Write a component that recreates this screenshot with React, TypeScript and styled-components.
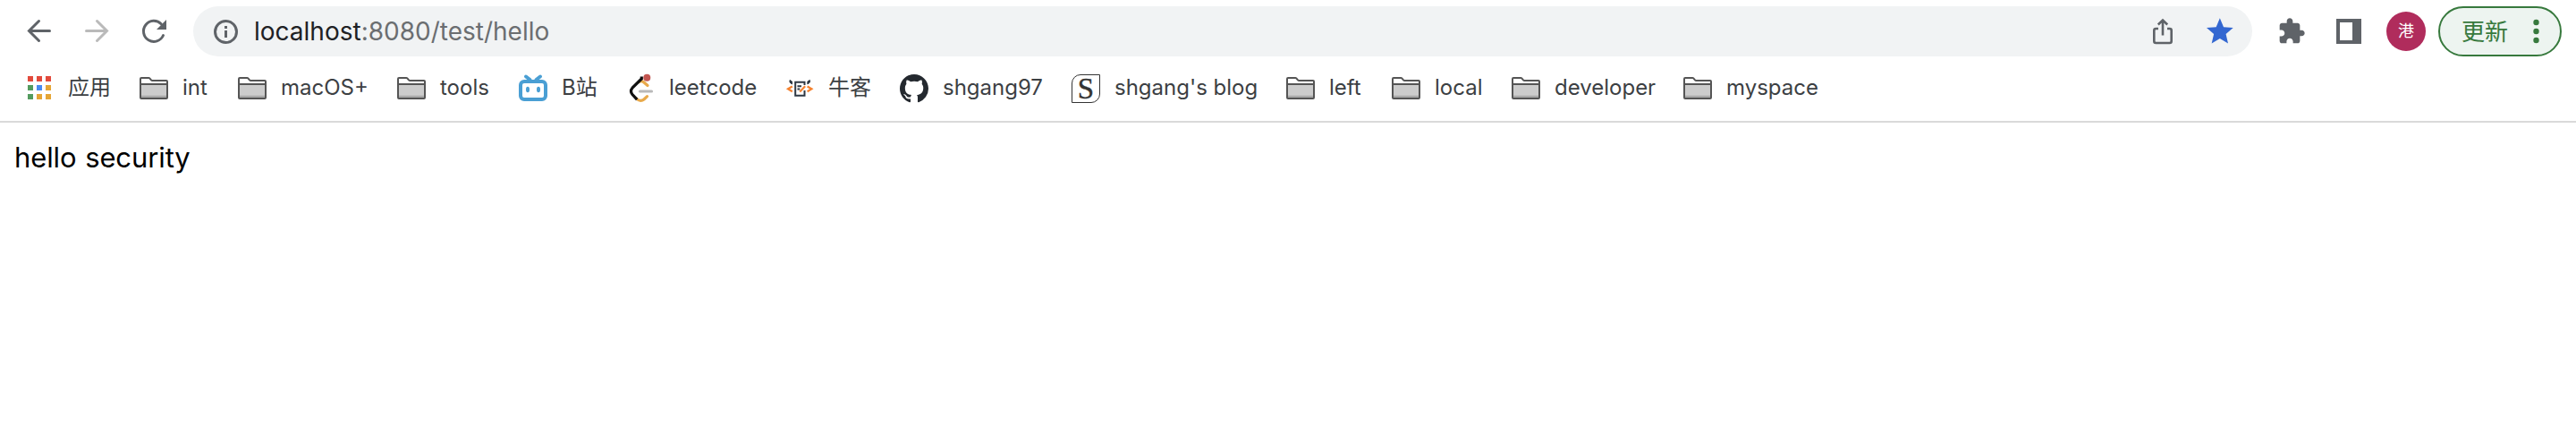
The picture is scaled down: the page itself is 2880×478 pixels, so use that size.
import React from "react";
import styled, { createGlobalStyle } from "styled-components";

const GlobalStyle = createGlobalStyle`
  body {
    margin: 0;
    background: #ffffff;
    font-family: Inter, "Noto Sans CJK SC", sans-serif;
  }
`;

const Browser = styled.div`
  display: flex;
  flex-direction: column;
  min-height: 478px;
`;

const Toolbar = styled.header`
  display: flex;
  align-items: center;
  height: 70px;
  padding: 0 16px 0 28px;
`;

const NavGroup = styled.nav`
  display: flex;
  gap: 32px;
  margin-right: 28px;
`;

const IconButton = styled.button<{ $color?: string }>`
  width: 32px;
  height: 32px;
  padding: 0;
  border: 0;
  background: none;
  color: ${(p) => p.$color ?? "#5f6368"};
`;

const Glyph = styled.svg`
  display: block;
  width: 32px;
  height: 32px;
  flex: none;
  overflow: visible;
`;

const AddressBar = styled.div`
  display: flex;
  flex: 1;
  align-items: center;
  height: 56px;
  padding: 0 20px 0 22px;
  border-radius: 28px;
  background: #f1f3f4;
`;

const InfoIcon = styled.svg`
  display: block;
  width: 28px;
  height: 28px;
  margin-right: 18px;
  overflow: visible;
`;

const Url = styled.div`
  flex: 1;
  font-size: 28px;
  line-height: 36px;
  color: #6b6e71;
`;

const Host = styled.span`
  color: #202124;
`;

const ActionGroup = styled.div`
  display: flex;
  gap: 32px;
`;

const ExtensionGroup = styled(ActionGroup)`
  margin: 0 26px 0 28px;
`;

const Avatar = styled.div`
  display: grid;
  place-items: center;
  box-sizing: border-box;
  width: 44px;
  height: 44px;
  margin-right: 14px;
  padding-bottom: 4px;
  border-radius: 50%;
  background: #b02c5c;
  color: #ffffff;
  font: 18px/26px "Noto Sans CJK SC", sans-serif;
`;

const UpdateButton = styled.button`
  display: flex;
  align-items: center;
  justify-content: space-between;
  box-sizing: border-box;
  width: 138px;
  height: 56px;
  padding: 0 23px 0 24px;
  border: 2px solid #37793d;
  border-radius: 28px;
  background: #edf4f0;
  color: #37793d;
  font: 26px/36px "Noto Sans CJK SC", sans-serif;
`;

const UpdateText = styled.span`
  padding-bottom: 2px;
`;

const MenuDots = styled.svg`
  width: 7px;
  height: 28px;
`;

const BookmarksBar = styled.div`
  display: flex;
  align-items: center;
  gap: 32px;
  box-sizing: border-box;
  height: 67px;
  padding: 0 28px 7px;
  border-bottom: 2px solid #dadada;
`;

const Bookmark = styled.a`
  display: flex;
  align-items: center;
  gap: 16px;
`;

const Label = styled.span<{ $width: number }>`
  width: ${(p) => p.$width}px;
  padding-bottom: 2px;
  color: #3c4043;
  font-size: 24px;
  line-height: 32px;
  white-space: nowrap;
`;

const Page = styled.main`
  padding: 19px 16px;
  color: #000000;
  font-size: 31px;
  line-height: 40px;
  letter-spacing: -0.1px;
  word-spacing: 1px;
`;

const AppsIcon = () => {
  const colors = ["#e24a3c", "#e24a3c", "#e24a3c", "#539b5e", "#4a8af0", "#e5a535", "#539b5e", "#e5a535", "#e5a535"];
  return (
    <Glyph viewBox="0 0 32 32">
      {colors.map((c, i) => (
        <rect key={i} x={3 + (i % 3) * 10} y={2 + Math.floor(i / 3) * 10} width="6" height="6" fill={c} />
      ))}
    </Glyph>
  );
};

const FolderIcon = () => (
  <Glyph viewBox="0 0 32 32">
    <path d="M1 11h30v15.500H1z" fill="#cccccc" />
    <path d="M1 23.700h30v3H1z" fill="#aaaaaa" />
    <path
      d="M1 5a1 1 0 0 1 1-1h8.200q.8 0 1.300.6L13 6.400q.5.6 1.300.6H30a1 1 0 0 1 1 1v18a1 1 0 0 1-1 1H2a1 1 0 0 1-1-1zM1 11h30"
      fill="none"
      stroke="#555555"
      strokeWidth="2"
    />
  </Glyph>
);

const BilibiliIcon = () => (
  <Glyph viewBox="0 0 32 32" fill="none" stroke="#4a9fd4" strokeWidth="4" strokeLinecap="round">
    <rect x="2" y="8" width="28" height="20" rx="4" />
    <path d="M8 2.500 12.500 6M24 2.500 19.500 6" />
    <ellipse cx="10" cy="17" rx="2" ry="3.200" fill="#4a9fd4" stroke="none" />
    <ellipse cx="22" cy="17" rx="2" ry="3.200" fill="#4a9fd4" stroke="none" />
  </Glyph>
);

const LeetcodeIcon = () => (
  <Glyph viewBox="0 0 32 32" fill="none" strokeWidth="3.200">
    <path d="M14.500 8.500c2-1.500 4-1 5.500.5l4 3.500" stroke="#e8a94a" strokeLinecap="round" />
    <path d="M11.500 27c3 3.200 6.500 2.600 8.500 1l3.500-3.300" stroke="#e8a94a" strokeLinecap="round" />
    <path d="M17.300 2.500V5L7 15.200q-3 3.600 0 7.300l5.200 5.700" stroke="#111111" />
    <path d="M15.500 19h13" stroke="#b9b9b9" strokeLinecap="round" />
    <circle cx="23.300" cy="3.800" r="4" fill="#c25550" />
  </Glyph>
);

const NowcoderIcon = () => (
  <Glyph viewBox="0 0 32 32" fill="none" strokeWidth="2">
    <path d="M21.500 12V8.800H11.200v15h10.300V18M13.500 13.300h4.500M13.500 16.500h2.800" stroke="#2f3944" />
    <path d="M5 6.500v2.500l2.500 2V8zM27.400 6.500V9l-2.500 2V8z" fill="#2f3944" stroke="#2f3944" strokeWidth="1" />
    <path d="M7.800 13.500 3 16.300l4.800 3M24.600 13.500l4.800 2.800-4.800 3M22.200 13.200l-6 6.300" stroke="#f5822f" strokeWidth="2.200" />
  </Glyph>
);

const GithubIcon = () => (
  <Glyph viewBox="0 0 16 16" fill="#24292f">
    <path d="M8 0C3.580 0 0 3.580 0 8c0 3.540 2.290 6.530 5.470 7.590.4.070.55-.17.55-.38 0-.19-.01-.82-.01-1.490-2.010.37-2.530-.49-2.690-.94-.09-.23-.48-.94-.82-1.130-.28-.15-.68-.52-.01-.53.63-.01 1.080.58 1.230.82.72 1.210 1.870.87 2.330.66.07-.52.28-.87.51-1.070-1.780-.2-3.640-.89-3.640-3.950 0-.87.31-1.590.82-2.150-.08-.2-.36-1.020.08-2.120 0 0 .67-.21 2.200.82.64-.18 1.320-.27 2-.27s1.360.09 2 .27c1.530-1.040 2.200-.82 2.200-.82.44 1.100.16 1.920.08 2.120.51.56.82 1.270.82 2.150 0 3.070-1.870 3.750-3.650 3.950.29.25.54.73.54 1.480 0 1.070-.01 1.930-.01 2.200 0 .21.15.46.55.38A8.010 8.010 0 0 0 16 8c0-4.420-3.580-8-8-8z" />
  </Glyph>
);

const BlogFrame = styled.span`
  display: grid;
  place-items: center;
  box-sizing: border-box;
  width: 32px;
  height: 32px;
  border: 1.5px solid #333333;
  border-radius: 10px 0 10px 0;
  color: #333333;
  font: 33px/30px "Liberation Serif", serif;
  -webkit-text-stroke: 0.4px #333333;
`;

const bookmarks: { name: string; width: number; icon: React.ReactNode }[] = [
  { name: "应用", width: 48, icon: <AppsIcon /> },
  { name: "int", width: 30, icon: <FolderIcon /> },
  { name: "macOS+", width: 98, icon: <FolderIcon /> },
  { name: "tools", width: 56, icon: <FolderIcon /> },
  { name: "B站", width: 40, icon: <BilibiliIcon /> },
  { name: "leetcode", width: 98, icon: <LeetcodeIcon /> },
  { name: "牛客", width: 48, icon: <NowcoderIcon /> },
  { name: "shgang97", width: 112, icon: <GithubIcon /> },
  { name: "shgang's blog", width: 160, icon: <BlogFrame>S</BlogFrame> },
  { name: "left", width: 38, icon: <FolderIcon /> },
  { name: "local", width: 54, icon: <FolderIcon /> },
  { name: "developer", width: 112, icon: <FolderIcon /> },
  { name: "myspace", width: 102, icon: <FolderIcon /> },
];

export default function App() {
  return (
    <Browser>
      <GlobalStyle />
      <Toolbar>
        <NavGroup>
          <IconButton aria-label="Back">
            <Glyph viewBox="0 0 32 32" fill="none" stroke="currentColor" strokeWidth="3" strokeLinecap="round">
              <path d="M27.500 15.500H5M15.500 4.500l-11 11 11 11" />
            </Glyph>
          </IconButton>
          <IconButton aria-label="Forward" $color="#bababa">
            <Glyph viewBox="0 0 32 32" fill="none" stroke="currentColor" strokeWidth="3" strokeLinecap="round">
              <path d="M4.500 15.500H27M16.500 4.500l11 11-11 11" />
            </Glyph>
          </IconButton>
          <IconButton aria-label="Reload">
            <Glyph viewBox="0 0 32 32">
              <path
                d="M24.200 7.800A11.500 11.500 0 1 0 26.500 20.500"
                fill="none"
                stroke="currentColor"
                strokeWidth="3"
                strokeLinecap="round"
              />
              <path d="M30 3v11H19z" fill="currentColor" />
            </Glyph>
          </IconButton>
        </NavGroup>
        <AddressBar>
          <InfoIcon viewBox="0 0 28 28" fill="none" stroke="#5f6368" strokeWidth="3">
            <circle cx="14.500" cy="14.500" r="12" />
            <path d="M14.500 8v3M14.500 13v8" />
          </InfoIcon>
          <Url>
            <Host>localhost</Host>:8080/test/hello
          </Url>
          <ActionGroup>
            <IconButton aria-label="Share">
              <Glyph viewBox="0 0 32 32" fill="none" stroke="currentColor" strokeWidth="2.600">
                <path d="M11 13H8.300a2 2 0 0 0-2 2v12a2 2 0 0 0 2 2h15.400a2 2 0 0 0 2-2V15a2 2 0 0 0-2-2H21" />
                <path d="M16 20.500V4M10.800 8.500 16 3.600l5.200 4.900" />
              </Glyph>
            </IconButton>
            <IconButton aria-label="Bookmarked" $color="#3367d1">
              <Glyph viewBox="1.330 1.130 21.550 21.550" fill="currentColor">
                <path d="M12 17.270 18.180 21l-1.640-7.030L22 9.240l-7.190-.61L12 2 9.190 8.630 2 9.240l5.460 4.730L5.820 21z" />
              </Glyph>
            </IconButton>
          </ActionGroup>
        </AddressBar>
        <ExtensionGroup>
          <IconButton aria-label="Extensions">
            <Glyph viewBox="0 0 24 24" fill="currentColor">
              <path d="M20.500 11H19V7c0-1.100-.9-2-2-2h-4V3.500C13 2.120 11.880 1 10.500 1S8 2.120 8 3.500V5H4c-1.100 0-1.990.9-1.990 2v3.800H3.500c1.490 0 2.700 1.210 2.700 2.700s-1.210 2.700-2.700 2.700H2V20c0 1.100.9 2 2 2h3.800v-1.500c0-1.490 1.210-2.700 2.700-2.700s2.700 1.210 2.700 2.700V22H17c1.100 0 2-.9 2-2v-4h1.500c1.380 0 2.500-1.120 2.500-2.500S21.880 11 20.500 11z" />
            </Glyph>
          </IconButton>
          <IconButton aria-label="Side panel">
            <Glyph viewBox="0 0 32 32" fill="currentColor">
              <path d="M2 2h28v28H2zM6 6v20h14V6z" fillRule="evenodd" />
            </Glyph>
          </IconButton>
        </ExtensionGroup>
        <Avatar>港</Avatar>
        <UpdateButton>
          <UpdateText>更新</UpdateText>
          <MenuDots viewBox="0 0 7 28" fill="currentColor">
            <circle cx="3.500" cy="4" r="3.200" />
            <circle cx="3.500" cy="14" r="3.200" />
            <circle cx="3.500" cy="24" r="3.200" />
          </MenuDots>
        </UpdateButton>
      </Toolbar>
      <BookmarksBar>
        {bookmarks.map((b) => (
          <Bookmark key={b.name}>
            {b.icon}
            <Label $width={b.width}>{b.name}</Label>
          </Bookmark>
        ))}
      </BookmarksBar>
      <Page>hello security</Page>
    </Browser>
  );
}
